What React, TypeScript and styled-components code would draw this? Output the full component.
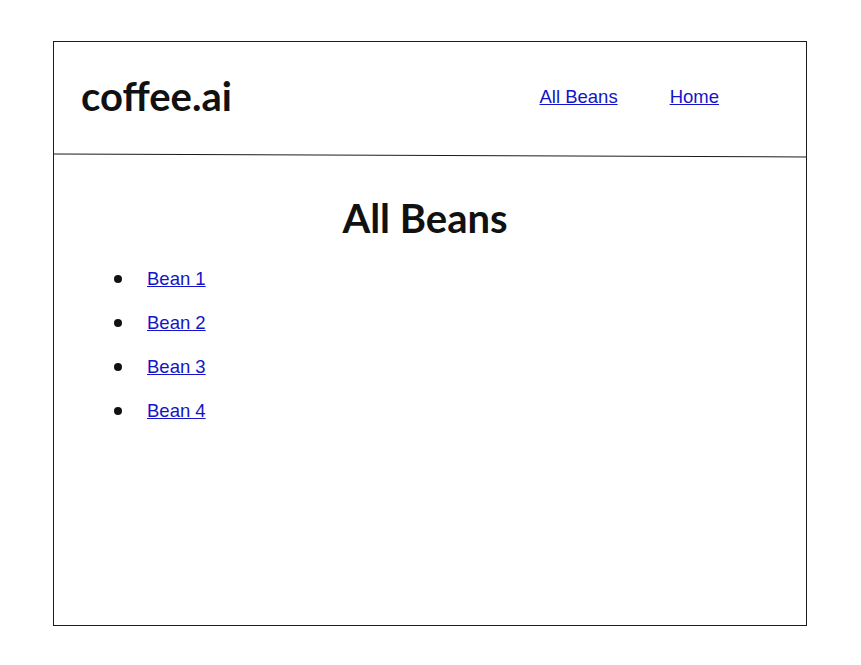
import React from 'react'
import styled, { createGlobalStyle } from 'styled-components'

const beans = ['Bean 1', 'Bean 2', 'Bean 3', 'Bean 4']

function App() {
    return (
        <>
            <GlobalStyle />
            <Page>
                <Frame>
                    <Header>
                        <Logo>coffee.ai</Logo>
                        <Nav>
                            <NavLink href="#">All Beans</NavLink>
                            <NavLink href="#">Home</NavLink>
                        </Nav>
                    </Header>
                    <Divider />
                    <Title>All Beans</Title>
                    <BeanList>
                        {beans.map((bean) => {
                            return <BeanItem key={bean}><BeanLink href="#">{bean}</BeanLink></BeanItem>
                        })}
                    </BeanList>
                </Frame>
            </Page>
        </>
    )
}

const GlobalStyle = createGlobalStyle`
    body {
        margin: 0;
        background: #ffffff;
        font-family: "Liberation Sans", Arial, sans-serif;
    }
`

const Page = styled.div`
    padding: 41px 0 0 53px;
`

const Frame = styled.div`
    width: 754px;
    height: 585px;
    box-sizing: border-box;
    border: 1px solid #1c1c1c;
    display: flex;
    flex-direction: column;
`

const Header = styled.div`
    height: 111px;
    display: flex;
    justify-content: space-between;
    align-items: flex-start;
    padding: 30px 87px 0 27px;
    box-sizing: border-box;
`

const Logo = styled.div`
    font-family: Lato, "Noto Sans", sans-serif;
    font-weight: 700;
    font-size: 40px;
    line-height: 48px;
    color: #111;
`

const Nav = styled.div`
    display: flex;
    gap: 52px;
    margin-top: 14px;
`

const NavLink = styled.a`
    font-size: 18.5px;
    color: #1414c8;
    text-decoration: underline;
`

const Divider = styled.div`
    height: 1px;
    margin-top: 1.5px;
    background: #1c1c1c;
    transform: rotate(0.23deg);
`

const Title = styled.h1`
    margin: 38px 10px 0 0;
    text-align: center;
    font-family: Lato, "Noto Sans", sans-serif;
    font-weight: 700;
    font-size: 40px;
    line-height: 48px;
    color: #111;
`

const BeanList = styled.ul`
    list-style: none;
    margin: 15px 0 0;
    padding: 0 0 0 60px;
`

const BeanItem = styled.li`
    display: flex;
    align-items: center;
    height: 44px;
    line-height: 44px;

    &::before{
        content: '';
        width: 8px;
        height: 8px;
        border-radius: 50%;
        background: #111;
        margin-right: 25px;
    }
`

const BeanLink = styled.a`
    font-size: 18.5px;
    color: #1414c8;
    text-decoration: underline;
`

export default App
